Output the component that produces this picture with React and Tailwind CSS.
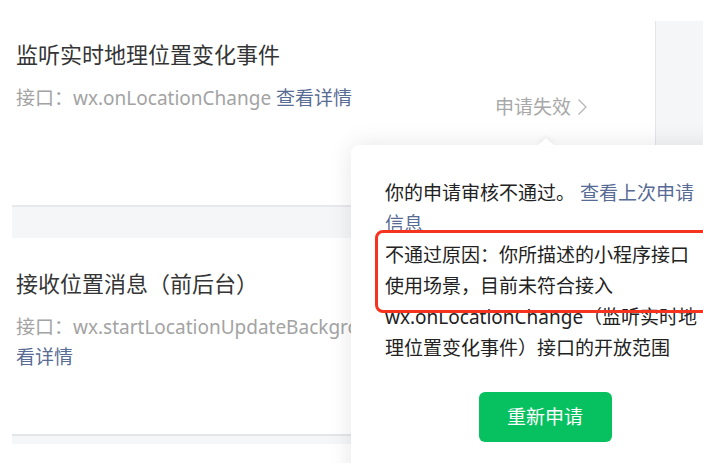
import React from "react";

function Chevron() {
  return (
    <svg width="11" height="18" viewBox="0 0 11 18" fill="none" className="shrink-0">
      <path d="M1.5 1.5 L9 9 L1.5 16.5" stroke="#b3b3b3" strokeWidth="1.2" />
    </svg>
  );
}

function Item({ title, children, status }) {
  return (
    <div className="flex h-[196px] items-center">
      <div className="flex-1 self-start pt-[30px] pl-[4px]">
        <div className="text-[22px] leading-[30px] text-[#353535]">{title}</div>
        <div className="mt-[14px] text-[19px] leading-[30px] text-[#a3a3a3] whitespace-nowrap">{children}</div>
      </div>
      {status && (
        <div className="flex items-center gap-[6px] pr-[67px] text-[19px] leading-[30px] text-[#a8a8a8]">
          <span>{status}</span>
          <Chevron />
        </div>
      )}
    </div>
  );
}

export default function App() {
  return (
    <div className="relative w-[703px] h-[463px] overflow-hidden bg-white font-['Noto_Sans','Noto_Sans_CJK_SC',sans-serif]">
      <div className="flex">
        <div className="ml-[12px] w-[643px] pt-[9px]">
          <Item title="监听实时地理位置变化事件" status="申请失效">
            接口：wx.onLocationChange <span className="text-[#576b95]">查看详情</span>
          </Item>
          <div className="h-[33px] bg-[#f4f6f7] border-t-2 border-[#e6e8ea]" />
          <Item title="接收位置消息（前后台）">
            接口：wx.startLocationUpdateBackground <span className="text-[#576b95]">查</span>
            <br />
            <span className="text-[#576b95]">看详情</span>
          </Item>
          <div className="h-[10px] bg-[#f4f6f7] border-t-2 border-[#e3e5e7]" />
        </div>
        <div className="flex-1 mt-[21px] h-[124px] bg-[#f4f6f7] border-l border-[#e3e5e7]" />
      </div>

      {/* popover */}
      <div className="absolute left-[351px] top-[145px] w-[388px] h-[340px] rounded-[8px] bg-white shadow-[0_0_24px_rgba(0,0,0,0.1)]">
        <svg
          className="absolute left-[186px] top-[-7px] drop-shadow-[0_-2px_2px_rgba(0,0,0,0.05)]"
          width="18"
          height="8"
          viewBox="0 0 18 8"
        >
          <path d="M0 8 L9 0 L18 8 Z" fill="#ffffff" />
        </svg>
        <div className="pt-[33px] pl-[34px] text-[19px] leading-[31px] text-[#222222] whitespace-nowrap">
          <div>
            你的申请审核不通过。 <span className="text-[#576b95]">查看上次申请</span>
          </div>
          <div className="text-[#576b95]">信息</div>
          <div>不通过原因：你所描述的小程序接口</div>
          <div>使用场景，目前未符合接入</div>
          <div>wx.onLocationChange（监听实时地</div>
          <div>理位置变化事件）接口的开放范围</div>
        </div>
        <div className="mt-[28px] flex justify-center">
          <button className="w-[133px] h-[50px] rounded-[6px] bg-[#07c160] text-[19px] text-white">
            重新申请
          </button>
        </div>
      </div>

      {/* red annotation box */}
      <div className="absolute left-[375px] top-[230px] w-[345px] h-[83px] rounded-[8px] border-[3px] border-[#f5331f]" />
    </div>
  );
}
